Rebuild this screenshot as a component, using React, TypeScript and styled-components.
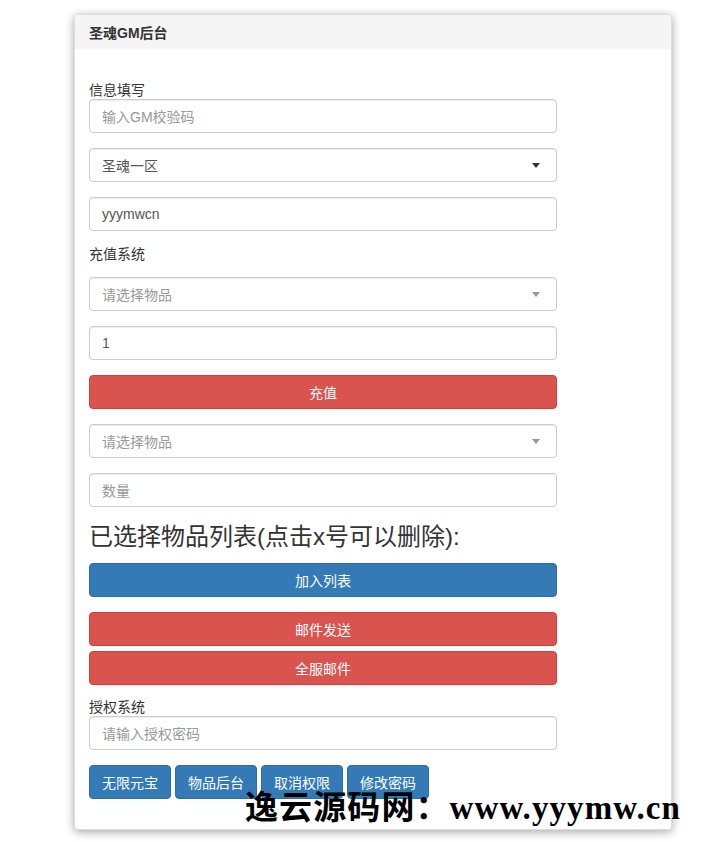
import React from 'react';
import styled, { createGlobalStyle } from 'styled-components';

const GlobalStyle = createGlobalStyle`
  html, body {
    margin: 0;
    padding: 0;
    background: #fff;
  }
  body {
    font-family: "Liberation Sans", "Noto Sans CJK SC", Arial, sans-serif;
    font-size: 14px;
    color: #333;
  }
  * { box-sizing: border-box; }
`;

const Page = styled.div`
  position: relative;
  padding: 14px 0 14px 74px;
`;

const Panel = styled.div`
  width: 598px;
  background: #fff;
  border: 1px solid #ddd;
  border-radius: 4px;
  box-shadow: 0 2px 10px rgba(0, 0, 0, 0.35);
`;

const PanelHeading = styled.div`
  height: 34px;
  padding: 0 14px;
  display: flex;
  align-items: center;
  background: #f5f5f5;
  border-radius: 3px 3px 0 0;
  font-weight: bold;
  font-size: 14px;
  color: #333;
`;

const PanelBody = styled.div`
  padding: 33px 14px 30px;
`;

const Form = styled.div`
  width: 468px;
  display: flex;
  flex-direction: column;
`;

const Label = styled.div<{ $top?: number; $bottom?: number }>`
  line-height: 17px;
  font-size: 14px;
  color: #333;
  margin-top: ${(p) => p.$top ?? 0}px;
  margin-bottom: ${(p) => p.$bottom ?? 0}px;
`;

const Field = styled.div<{ $placeholder?: boolean }>`
  height: 34px;
  margin-bottom: 15px;
  padding: 0 12px;
  display: flex;
  align-items: center;
  justify-content: space-between;
  border: 1px solid #ccc;
  border-radius: 4px;
  box-shadow: inset 0 1px 1px rgba(0, 0, 0, 0.075);
  background: #fff;
  color: ${(p) => (p.$placeholder ? '#999' : '#555')};
  font-size: 14px;
`;

const Caret = styled.span<{ $dark?: boolean }>`
  width: 0;
  height: 0;
  margin-right: 4px;
  border-left: 4px solid transparent;
  border-right: 4px solid transparent;
  border-top: 5px solid ${(p) => (p.$dark ? '#333' : '#999')};
`;

const Button = styled.div<{ $variant: 'danger' | 'primary'; $mb?: number }>`
  height: 34px;
  display: flex;
  align-items: center;
  justify-content: center;
  border-radius: 4px;
  color: #fff;
  font-size: 14px;
  margin-bottom: ${(p) => p.$mb ?? 15}px;
  background: ${(p) => (p.$variant === 'danger' ? '#d9534f' : '#337ab7')};
  border: 1px solid ${(p) => (p.$variant === 'danger' ? '#d43f3a' : '#2e6da4')};
`;

const Heading = styled.h3`
  margin: 0 0 11px;
  font-size: 24px;
  font-weight: 400;
  line-height: 30px;
  color: #333;
`;

const ButtonRow = styled.div`
  display: flex;
  gap: 4px;
`;

const SmallButton = styled(Button)`
  padding: 0 12px;
  margin-bottom: 0;
`;

const Watermark = styled.div`
  position: absolute;
  left: 245px;
  top: 781px;
  font-family: "Liberation Serif", "Noto Sans CJK SC", serif;
  font-weight: bold;
  font-size: 33px;
  letter-spacing: 1.1px;
  color: #000;
  white-space: nowrap;
`;

const Select = ({ text, placeholder, dark }: { text: string; placeholder?: boolean; dark?: boolean }) => (
  <Field $placeholder={placeholder}>
    <span>{text}</span>
    <Caret $dark={dark} />
  </Field>
);

export default function App() {
  return (
    <>
      <GlobalStyle />
      <Page>
        <Panel>
          <PanelHeading>圣魂GM后台</PanelHeading>
          <PanelBody>
            <Form>
              <Label>信息填写</Label>
              <Field $placeholder>输入GM校验码</Field>
              <Select text="圣魂一区" dark />
              <Field>yyymwcn</Field>

              <Label $bottom={14}>充值系统</Label>
              <Select text="请选择物品" placeholder />
              <Field>1</Field>
              <Button $variant="danger">充值</Button>
              <Select text="请选择物品" placeholder />
              <Field $placeholder>数量</Field>

              <Heading>已选择物品列表(点击x号可以删除):</Heading>
              <Button $variant="primary">加入列表</Button>
              <Button $variant="danger" $mb={5}>邮件发送</Button>
              <Button $variant="danger" $mb={0}>全服邮件</Button>

              <Label $top={14}>授权系统</Label>
              <Field $placeholder>请输入授权密码</Field>
              <ButtonRow>
                <SmallButton $variant="primary">无限元宝</SmallButton>
                <SmallButton $variant="primary">物品后台</SmallButton>
                <SmallButton $variant="primary">取消权限</SmallButton>
                <SmallButton $variant="primary">修改密码</SmallButton>
              </ButtonRow>
            </Form>
          </PanelBody>
        </Panel>
        <Watermark>逸云源码网：www.yyymw.cn</Watermark>
      </Page>
    </>
  );
}
